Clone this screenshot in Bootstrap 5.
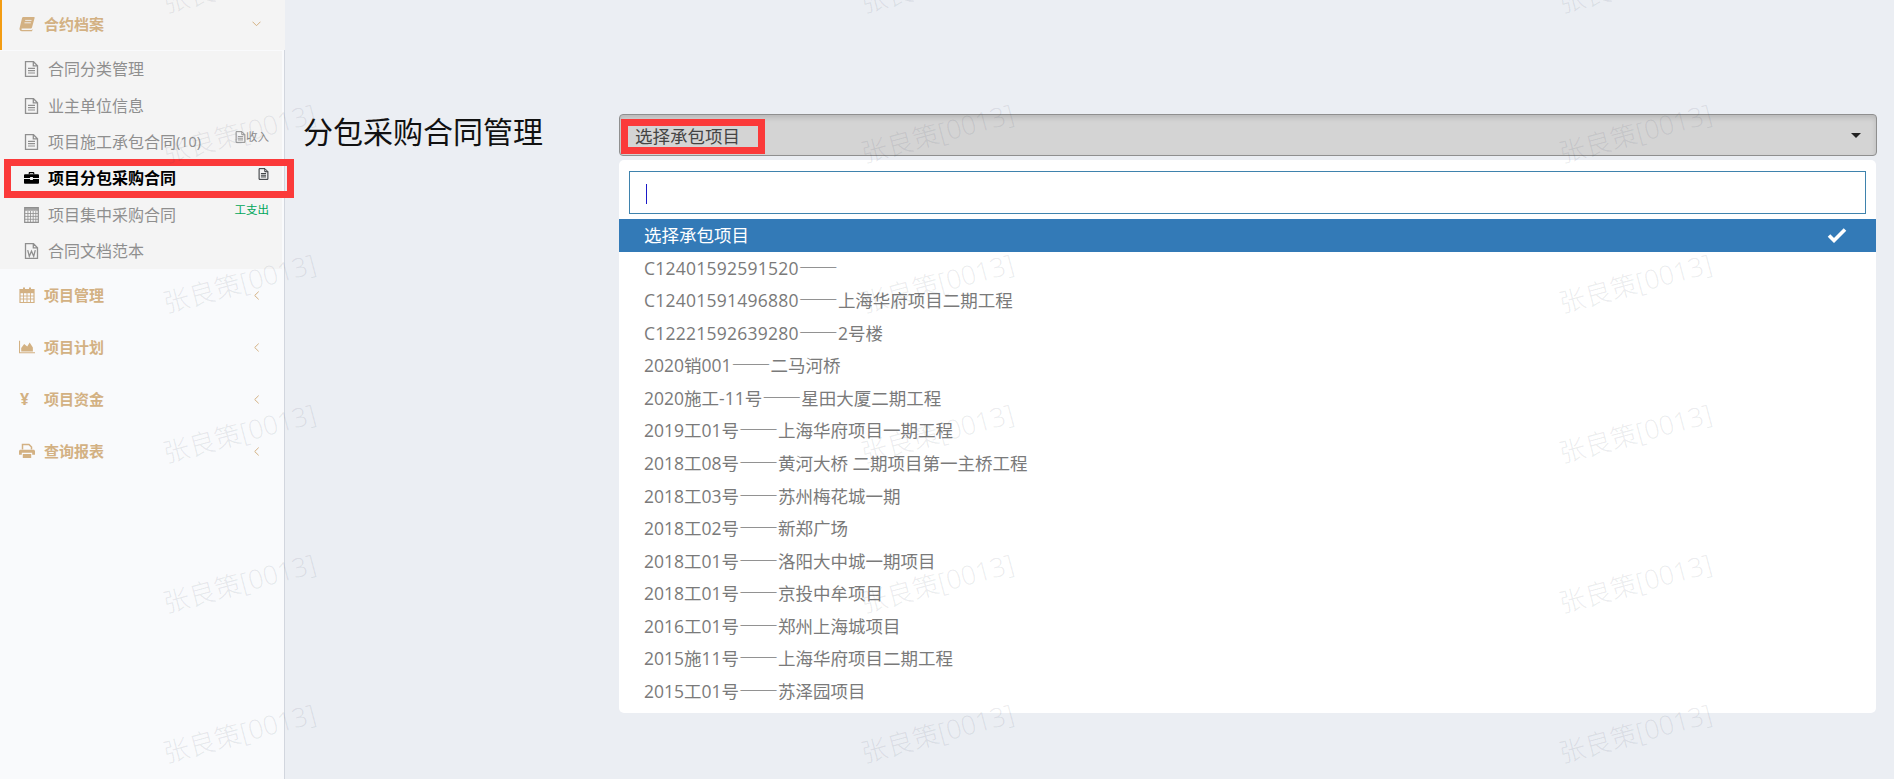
<!DOCTYPE html>
<html lang="zh">
<head>
    <meta charset="UTF-8">
    <meta name="viewport" content="width=device-width, initial-scale=1.0">
    <title>分包采购合同管理</title>
    <link href="https://cdn.jsdelivr.net/npm/bootstrap@5.3.0/dist/css/bootstrap.min.css" rel="stylesheet">
    <style>
        html, body {
            height: 779px;
            overflow: hidden;
        }
        body {
            background-color: #ebeef3;
            font-family: "Open Sans", "Noto Sans CJK SC", sans-serif;
            position: relative;
        }
        .side-bar {
            width: 285px;
            height: 779px;
            flex-shrink: 0;
            background-color: #f9fafc;
            border-right: 1px solid #d2d6de;
        }
        .group-head {
            height: 50px;
            padding: 0 24px 2px 17px;
            background-color: #f4f4f4;
            border-left: 2px solid #f39c12;
            margin-right: -1px;
        }
        .group-row {
            height: 52px;
            padding: 0 24px 0 19px;
        }
        .group-row, .group-head {
            color: #d3b183;
            font-size: 15px;
            font-weight: 700;
        }
        .group-ico {
            width: 16px;
            height: 16px;
            margin-right: 9px;
            flex-shrink: 0;
        }
        .yen-ico {
            width: 16px;
            margin-right: 9px;
            padding-left: 1px;
            font-size: 16px;
            line-height: 16px;
        }
        .sub-list {
            margin: 1px 2px 0 0;
            height: 218px;
            background-color: #f4f4f4;
        }
        .sub-row {
            height: 36.4px;
            padding: 0 13px 0 24px;
            color: #8f8f8f;
            font-size: 16px;
            position: relative;
        }
        .sub-row.current {
            color: #000;
            font-weight: 700;
        }
        .sub-row.current::after {
            content: "";
            position: absolute;
            left: 4px;
            top: -1px;
            width: 290px;
            height: 39px;
            border: 7px solid #fb3a3a;
        }
        .sub-ico {
            width: 15px;
            height: 16px;
            margin-right: 9px;
            flex-shrink: 0;
        }
        .row-count {
            font-size: 14.5px;
        }
        .tag-text {
            margin-left: auto;
            margin-bottom: 9px;
            font-size: 11.5px;
            font-weight: 400;
            line-height: 14px;
            color: #8b8b8b;
        }
        .tag-green {
            color: #00a65a;
        }
        .tag-ico {
            width: 11px;
            height: 12px;
        }
        .page-title {
            width: 334px;
            flex-shrink: 0;
            margin: 0;
            padding: 0 0 0 18px;
            font-size: 30px;
            font-weight: 400;
            line-height: 36px;
            color: #111;
        }
        .main-area {
            padding: 114px 17px 0 0;
        }
        .picker-box {
            width: 1258px;
        }
        .picker-btn {
            height: 42px;
            padding: 0 15px 0 1px;
            background-color: #d4d4d4;
            border: 1px solid #8f8f8f;
            border-radius: 4px;
            box-shadow: inset 0 3px 5px rgba(0, 0, 0, .125);
            color: #444;
            font-size: 17.5px;
            --bs-btn-hover-bg: #d4d4d4;
        }
        .picker-btn::after {
            color: #222;
            margin: 0;
            align-self: center;
        }
        .picker-label {
            display: block;
            height: 35px;
            margin-top: 4px;
            padding: 0 18px 0 7px;
            border: 7px solid #fb3a3a;
            line-height: 21px;
        }
        .picker-menu {
            margin-top: 4px !important;
            padding: 11px 0 5px;
            height: 553px;
            border: 0;
            border-radius: 5px;
            width: 1257px;
            min-width: 0;
        }
        .search-wrap {
            padding: 0 10px 5px;
        }
        .search-field {
            display: block;
            width: 100%;
            height: 43px;
            border: 1px solid #3f83ad;
            padding: 0 16px;
            position: relative;
        }
        .fake-caret {
            position: absolute;
            left: 16px;
            top: 12px;
            width: 1px;
            height: 20px;
            background-color: #1a1ac8;
        }
        .opt-row {
            height: 32.57px;
            padding: 0 25px;
            color: #7a7a7a;
            font-size: 17.5px;
            line-height: 32.57px;
        }
        .opt-row.active {
            background-color: #337ab7;
            color: #fff;
        }
        .opt-check {
            margin-right: 4px;
        }
        .opt-code {
            letter-spacing: .25px;
        }
        .opt-dash {
            font-family: "Noto Sans CJK SC", sans-serif;
            font-size: 19.5px;
            line-height: 1;
        }
        .wm-layer {
            position: absolute;
            left: -110px;
            top: -91px;
            display: grid;
            grid-template-columns: repeat(3, 698px);
            grid-auto-rows: 150px;
            place-items: center;
            pointer-events: none;
            z-index: 5;
        }
        .wm-text {
            transform: rotate(-15deg);
            font-size: 26.5px;
            font-weight: 300;
            white-space: nowrap;
            color: rgba(55, 65, 85, .1);
        }
    </style>
</head>
<body>
    <svg width="0" height="0" class="position-absolute">
        <symbol id="i-file" viewBox="0 0 15 16">
            <path d="M1.5.7h8l4 4v10.6h-12z M9.3.9v4h4" fill="none" stroke="currentColor" stroke-width="1.3"/>
            <path d="M4 7.4h7M4 9.7h7M4 12h7" stroke="currentColor" stroke-width="1.2"/>
        </symbol>
        <symbol id="i-word" viewBox="0 0 15 16">
            <path d="M1.5.7h8l4 4v10.6h-12z M9.3.9v4h4" fill="none" stroke="currentColor" stroke-width="1.3"/>
            <path d="M3.7 7.2l1.6 6 2.2-5 2.2 5 1.6-6" fill="none" stroke="currentColor" stroke-width="1.3"/>
        </symbol>
        <symbol id="i-calc" viewBox="0 0 15 16">
            <path d="M.7.7h13.6v14.6H.7z" fill="none" stroke="currentColor" stroke-width="1.2"/>
            <path d="M1 1h13v2.800H1z" fill="currentColor" opacity=".8"/>
            <path d="M1 6.500h13M1 9.400h13M1 12.300h13M3.900 4v11M6.500 4v11M9.200 4v11M11.800 4v11" stroke="currentColor" stroke-width=".8"/>
        </symbol>
        <symbol id="i-case" viewBox="0 0 16 16">
            <path d="M5 4V2.600C5 2 5.500 1.600 6 1.600h4c.6 0 1 .4 1 1V4H9.800V2.800H6.200V4z" fill="currentColor"/>
            <path d="M1.200 4h13.600c.6 0 1.200.5 1.200 1.100V8H9.500V7h-3v1H0V5.100C0 4.500.6 4 1.200 4zM0 9h6.500v1.200h3V9H16v4c0 .6-.6 1.100-1.200 1.100H1.200C.6 14.100 0 13.600 0 13z" fill="currentColor"/>
        </symbol>
        <symbol id="i-book" viewBox="0 0 16 16">
            <path d="M4.200 1h10.600c.6 0 1 .4.800 1l-2.600 9.500c-.2.600-.6.900-1.200.9H3.400c-.8 0-1.100.5-1 .9.100.5.500.7 1 .7h9.300l.6-.8.300.5-.7 1.600H2.900C1.500 15.300.3 14.200.5 12.600L3 2.200C3.200 1.500 3.600 1 4.200 1z" fill="currentColor"/>
            <path d="M6.200 4.400h6.300M5.500 6.800h6.300" stroke="#f4f4f4" stroke-width=".9"/>
        </symbol>
        <symbol id="i-cal" viewBox="0 0 16 16">
            <path d="M1 2.500h14v13H1z" fill="none" stroke="currentColor" stroke-width="1.200"/>
            <path d="M1 3h14v3.200H1z" fill="currentColor"/>
            <path d="M4 .5h2v4H4zM10 .5h2v4h-2z" fill="currentColor"/>
            <path d="M1 9h14M1 12h14M4.500 6v9M8 6v9M11.500 6v9" stroke="currentColor" stroke-width=".9"/>
        </symbol>
        <symbol id="i-area" viewBox="0 0 18 16">
            <path d="M.6 1v13.400H18" fill="none" stroke="currentColor" stroke-width="1.200"/>
            <path d="M2.500 13V9l3.300-4.500 3.500 3L12 3l3.600 5.500V13z" fill="currentColor"/>
        </symbol>
        <symbol id="i-print" viewBox="0 0 16 16">
            <path d="M3.500 6.500V1.500h6.500l2.500 2.500v2.500" fill="none" stroke="currentColor" stroke-width="1.500"/>
            <path d="M1.500 6.800h13c.8 0 1.500.7 1.500 1.500v3.400h-2.800V9.800H2.800v1.900H0V8.300c0-.8.7-1.500 1.500-1.500z" fill="currentColor"/>
            <path d="M3.800 11h8.400v4H3.800z" fill="currentColor"/>
        </symbol>
    </svg>

    <div class="d-flex">
        <aside class="side-bar">
            <div class="group-head d-flex align-items-center">
                <svg class="group-ico"><use href="#i-book"/></svg>
                <span>合约档案</span>
                <svg class="ms-auto" width="9" height="6" viewBox="0 0 9 6"><path d="M.5.7l4 4 4-4" fill="none" stroke="currentColor"/></svg>
            </div>
            <div class="sub-list">
                <div class="sub-row d-flex align-items-center"><svg class="sub-ico"><use href="#i-file"/></svg>合同分类管理</div>
                <div class="sub-row d-flex align-items-center"><svg class="sub-ico"><use href="#i-file"/></svg>业主单位信息</div>
                <div class="sub-row d-flex align-items-center"><svg class="sub-ico"><use href="#i-file"/></svg>项目施工承包合同<span class="row-count">(10)</span>
                    <span class="tag-text d-flex align-items-center"><svg class="tag-ico"><use href="#i-file"/></svg>收入</span>
                </div>
                <div class="sub-row current d-flex align-items-center"><svg class="sub-ico"><use href="#i-case"/></svg>项目分包采购合同
                    <span class="tag-text d-flex align-items-center"><svg class="tag-ico text-dark"><use href="#i-file"/></svg></span>
                </div>
                <div class="sub-row d-flex align-items-center"><svg class="sub-ico"><use href="#i-calc"/></svg>项目集中采购合同
                    <span class="tag-text tag-green">工支出</span>
                </div>
                <div class="sub-row d-flex align-items-center"><svg class="sub-ico"><use href="#i-word"/></svg>合同文档范本</div>
            </div>
            <div class="group-row d-flex align-items-center">
                <svg class="group-ico"><use href="#i-cal"/></svg>
                <span>项目管理</span>
                <svg class="ms-auto" width="7" height="9" viewBox="0 0 7 9"><path d="M5.700.6l-4 3.900 4 3.900" fill="none" stroke="currentColor"/></svg>
            </div>
            <div class="group-row d-flex align-items-center">
                <svg class="group-ico"><use href="#i-area"/></svg>
                <span>项目计划</span>
                <svg class="ms-auto" width="7" height="9" viewBox="0 0 7 9"><path d="M5.700.6l-4 3.900 4 3.900" fill="none" stroke="currentColor"/></svg>
            </div>
            <div class="group-row d-flex align-items-center">
                <span class="yen-ico">¥</span>
                <span>项目资金</span>
                <svg class="ms-auto" width="7" height="9" viewBox="0 0 7 9"><path d="M5.700.6l-4 3.900 4 3.900" fill="none" stroke="currentColor"/></svg>
            </div>
            <div class="group-row d-flex align-items-center">
                <svg class="group-ico"><use href="#i-print"/></svg>
                <span>查询报表</span>
                <svg class="ms-auto" width="7" height="9" viewBox="0 0 7 9"><path d="M5.700.6l-4 3.900 4 3.900" fill="none" stroke="currentColor"/></svg>
            </div>
        </aside>

        <main class="main-area d-flex flex-grow-1">
            <h1 class="page-title">分包采购合同管理</h1>
            <div class="picker-box dropdown">
                <button class="picker-btn btn dropdown-toggle w-100 d-flex align-items-start justify-content-between" type="button">
                    <span class="picker-label">选择承包项目</span>
                </button>
                <div class="picker-menu dropdown-menu show position-static">
                    <div class="search-wrap">
                        <div class="search-field"><span class="fake-caret"></span></div>
                    </div>
                    <div class="opt-row active d-flex justify-content-between align-items-center">
                        <span>选择承包项目</span>
                        <svg class="opt-check" width="20" height="16" viewBox="0 0 20 16"><path d="M2 8.500l5 5L18 2.500" fill="none" stroke="#fff" stroke-width="3.600"/></svg>
                    </div>
                    <div class="opt-row"><span class="opt-code">C12401592591520</span><span class="opt-dash">——</span></div>
                    <div class="opt-row"><span class="opt-code">C12401591496880</span><span class="opt-dash">——</span>上海华府项目二期工程</div>
                    <div class="opt-row"><span class="opt-code">C12221592639280</span><span class="opt-dash">——</span>2号楼</div>
                    <div class="opt-row">2020销001<span class="opt-dash">——</span>二马河桥</div>
                    <div class="opt-row">2020施工-11号<span class="opt-dash">——</span>星田大厦二期工程</div>
                    <div class="opt-row">2019工01号<span class="opt-dash">——</span>上海华府项目一期工程</div>
                    <div class="opt-row">2018工08号<span class="opt-dash">——</span>黄河大桥 二期项目第一主桥工程</div>
                    <div class="opt-row">2018工03号<span class="opt-dash">——</span>苏州梅花城一期</div>
                    <div class="opt-row">2018工02号<span class="opt-dash">——</span>新郑广场</div>
                    <div class="opt-row">2018工01号<span class="opt-dash">——</span>洛阳大中城一期项目</div>
                    <div class="opt-row">2018工01号<span class="opt-dash">——</span>京投中牟项目</div>
                    <div class="opt-row">2016工01号<span class="opt-dash">——</span>郑州上海城项目</div>
                    <div class="opt-row">2015施11号<span class="opt-dash">——</span>上海华府项目二期工程</div>
                    <div class="opt-row">2015工01号<span class="opt-dash">——</span>苏泽园项目</div>
                </div>
            </div>
        </main>
    </div>

    <div class="wm-layer" id="wmLayer"></div>

    <script src="https://cdn.jsdelivr.net/npm/bootstrap@5.3.0/dist/js/bootstrap.bundle.min.js"></script>
    <script>
        // watermark repeats over the whole page
        const wmLayer = document.getElementById('wmLayer');
        for (let i = 0; i < 18; i++) {
            const el = document.createElement('span');
            el.className = 'wm-text';
            el.textContent = '张良策[0013]';
            wmLayer.appendChild(el);
        }
    </script>
</body>
</html>
